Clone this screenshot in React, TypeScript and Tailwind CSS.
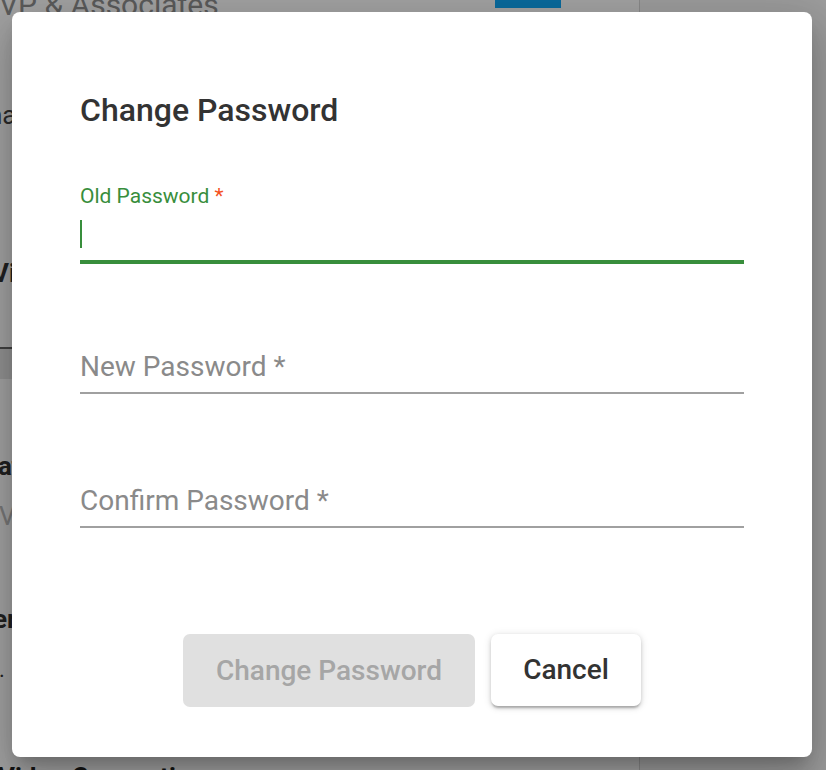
import React from "react";

export default function App() {
  return (
    <div className="relative w-[826px] h-[770px] overflow-hidden bg-white font-['Roboto','Liberation_Sans',sans-serif]">
      {/* background page */}
      <div className="flex h-full">
        <div className="w-[640px] h-full border-r border-[#d8d8d8] flex flex-col relative">
          <div className="shrink-0 flex items-start h-[22px]">
            <div className="-mt-[12px] -ml-[1px] text-[30px] leading-[34px] text-[#8f8f8f] whitespace-nowrap">VP &amp; Associates</div>
            <div className="ml-auto mr-[78px] w-[66px] h-[8px] bg-[#11a8f8]" />
          </div>
          <div className="shrink-0 mt-[78px] -ml-[29px] text-[26px] leading-[30px] text-[#444] whitespace-nowrap">Chat</div>
          <div className="shrink-0 mt-[128px] -ml-[8px] text-[26px] leading-[30px] font-bold text-[#333] whitespace-nowrap">Video</div>
          <div className="shrink-0 mt-[59px] h-[2px] bg-[#666]" />
          <div className="shrink-0 h-[30px] bg-[#e4e4e4]" />
          <div className="shrink-0 mt-[72px] -ml-[19px] text-[26px] leading-[30px] font-bold text-[#333] whitespace-nowrap">Data</div>
          <div className="shrink-0 mt-[20px] -ml-[1px] text-[26px] leading-[30px] text-[#bbb] whitespace-nowrap">Verified</div>
          <div className="shrink-0 mt-[73px] -ml-[23px] text-[26px] leading-[30px] font-bold text-[#333] whitespace-nowrap">Server</div>
          <div className="shrink-0 mt-[21px] -ml-[1px] text-[22px] leading-[30px] text-[#333]">.</div>
          <div className="shrink-0 mt-[77px] -ml-[2px] text-[26px] leading-[30px] font-bold text-[#222] whitespace-nowrap">Video Connection</div>
        </div>
        <div className="flex-1 h-full bg-[#f6f6f6]" />
      </div>

      {/* overlay */}
      <div className="absolute inset-0 bg-black/[0.365]" />

      {/* dialog */}
      <div className="absolute left-[12px] top-[12px] w-[800px] h-[745px] bg-white rounded-[8px] shadow-[0_11px_15px_-7px_rgba(0,0,0,0.2),0_24px_38px_3px_rgba(0,0,0,0.14),0_9px_46px_8px_rgba(0,0,0,0.12)] flex flex-col px-[68px] pt-[80px]">
        <h2 className="text-[32px] leading-[36px] font-medium text-[#333]">Change Password</h2>

        {/* Old password (focused) */}
        <div className="mt-[56px] flex flex-col">
          <div className="h-[24px] text-[21px] leading-[24px] text-[#388e3c] whitespace-nowrap">
            Old Password <span className="text-[#f4511e]">*</span>
          </div>
          <div className="h-[56px] flex items-center border-b-[4px] border-[#388e3c]">
            <div className="w-[2px] h-[28px] bg-[#388e3c]" />
          </div>
        </div>

        {/* New password */}
        <div className="mt-[52px] flex flex-col">
          <div className="h-[22px]" />
          <div className="h-[56px] flex items-center border-b-[2px] border-[#a0a0a0]">
            <span className="pt-[4px] text-[28px] leading-[32px] text-[#8a8a8a] whitespace-nowrap">New Password *</span>
          </div>
        </div>

        {/* Confirm password */}
        <div className="mt-[56px] flex flex-col">
          <div className="h-[22px]" />
          <div className="h-[56px] flex items-center border-b-[2px] border-[#a0a0a0]">
            <span className="pt-[4px] text-[28px] leading-[32px] text-[#8a8a8a] whitespace-nowrap">Confirm Password *</span>
          </div>
        </div>

        {/* Buttons */}
        <div className="mt-[106px] flex justify-center gap-[16px]">
          <button className="w-[292px] h-[73px] rounded-[7px] bg-[#e0e0e0] text-[#a6a6a6] text-[28px] font-medium whitespace-nowrap">
            Change Password
          </button>
          <button className="w-[150px] h-[72px] rounded-[7px] bg-white text-[#333] text-[28px] font-medium shadow-[0_3px_2px_-1px_rgba(0,0,0,0.2),0_2px_4px_0_rgba(0,0,0,0.14),0_1px_8px_0_rgba(0,0,0,0.12)]">
            Cancel
          </button>
        </div>
      </div>
    </div>
  );
}
